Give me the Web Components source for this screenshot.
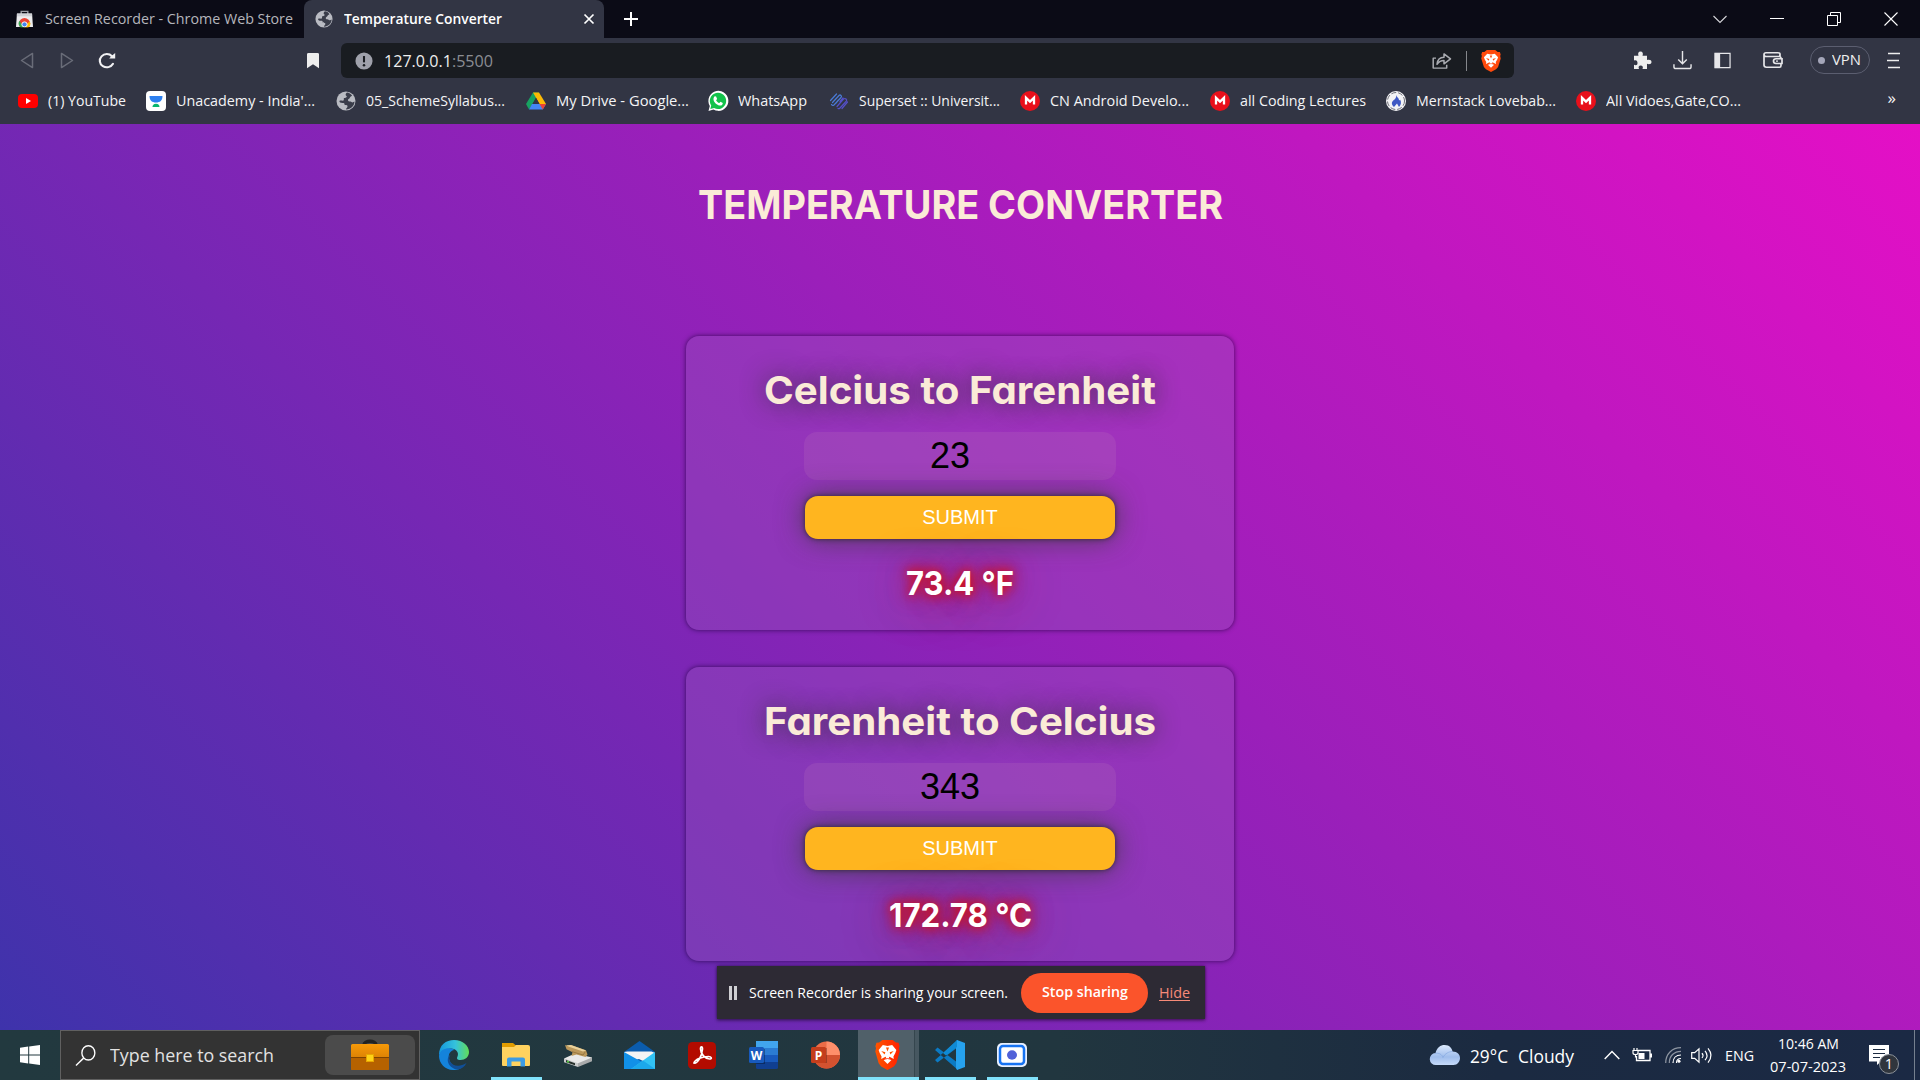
<!DOCTYPE html>
<html lang="en"><head><meta charset="utf-8"><title>Temperature Converter</title>
<style>html,body{margin:0;width:1920px;height:1080px;overflow:hidden;background:#0b0b16}</style></head>
<body><desktop-screen></desktop-screen>
<script>
const lion = (a, b) => `<defs><linearGradient id="g" x2="1"><stop stop-color="${a}"/><stop offset="1" stop-color="${b}"/></linearGradient></defs>
<path fill="url(#g)" d="M7 0h10l3 2.6 2.6 .1 1 3.6-.6 2 .7 3.2-3.2 11.7-2.4 3.2L12 30l-6.1-3.6-2.4-3.2L.3 11.5 1 8.300.4 6.300l1-3.600L4 2.600z"/>
<path fill="#fff" d="M7.500 5l4.500 1 4.500-1 4 5-1 3-1.800 3.500.3 2.500-3.600-2-1-.2.200 1.800 2.200 1.500-3.800 4-3.800-4 2.200-1.500.2-1.800-1 .2-3.600 2 .3-2.500L4.500 13l-1-3z"/>
<path fill="${a}" d="M6 11l4 1.300-.8 2.200zM18 11l-4 1.300.8 2.200zM10.500 7.500h3l-1.500 4z"/><path d="M8 19.500l4-1 4 1" fill="none" stroke="${b}" stroke-width=".8"/>`;
const mega = `<circle cx="10" cy="10" r="10" fill="#e8101b"/><path d="M6 13.500V6.800l4 3.800 4-3.800v6.700" fill="none" stroke="#fff" stroke-width="2.300"/>`;
const globe = `<circle cx="10" cy="10" r="9.500" fill="#b9bbc2"/><path fill="#3a3d4a" d="M11 1.500c-2 1.500-1.500 3-.5 3.500s-.5 2-2 2 0 2-1 2.500-3.500-.5-4 .5 1 2 3 2 2 .5 2 1.500 2.500 0 3 1.500-2 2.500-1.500 3.500c5 0 8.500-4 8.500-8-1 .5-2 1.500-3 .5s-3 0-3.500-1.500 1.500-1.500 2-3 2-1 2-2c-1-1.500-3-3-5-3z"/>`;
const ICONS = {
store:['0 0 18 20',`<path d="M5.500 4.500V1.500h7v3" fill="none" stroke="#9b9da5" stroke-width="1.500"/><path fill="#ececee" d="M1 4h16l1 15H0z"/><path fill="#cfd1d6" d="M1 4h16v3H1z"/><circle cx="9" cy="15" r="6" fill="#e94335"/><path fill="#36a852" d="M3.500 12a6 6 0 0 0 2 8H9z"/><path fill="#fbbc05" d="M14.500 12.500A6 6 0 0 1 12.500 20H8l3-4z"/><circle cx="9" cy="16" r="2.800" fill="#4285f4" stroke="#fff"/><path d="M0 19.300h18V22H0z" fill="#0b0b16"/>`],
globe:['0 0 20 20',globe],
x:['0 0 12 12',`<path d="M1.500 1.500l9 9m0-9l-9 9" stroke="#fff" stroke-width="1.700"/>`],
plus:['0 0 16 16',`<path d="M8 1v14M1 8h14" stroke="#fff" stroke-width="2"/>`],
down:['0 0 14 14',`<path d="M.5 4L7 10.500 13.500 4" fill="none" stroke="#d6d6da" stroke-width="1.100"/>`],
min:['0 0 14 14',`<path d="M0 6.500h14" stroke="#fff"/>`],
restore:['0 0 14 14',`<path d="M.5 3.500h10v10H.5zM3.500 3.500v-3h10v10h-3" fill="none" stroke="#fff"/>`],
close:['0 0 14 14',`<path d="M.5.5l13 13m0-13l-13 13" stroke="#fff" stroke-width="1.100"/>`],
back:['0 0 14 18',`<path d="M12.500 1.500v15L1.500 9z" fill="none" stroke="#696c78" stroke-width="1.500" stroke-linejoin="round"/>`],
fwd:['0 0 14 18',`<path d="M1.500 1.500v15L12.500 9z" fill="none" stroke="#696c78" stroke-width="1.500" stroke-linejoin="round"/>`],
reload:['0 0 18 18',`<path d="M15 12.500A7 7 0 1 1 14 4.500" fill="none" stroke="#f1f1f3" stroke-width="2.100" stroke-linecap="round"/><path d="M17.200 1v6h-6l2-2.600z" fill="#f1f1f3"/>`],
mark:['0 0 14 18',`<path d="M1 2.500Q1 1 2.500 1h9Q13 1 13 2.500V17.300L7 13l-6 4.300z" fill="#eee"/>`],
info:['0 0 20 20',`<circle cx="10" cy="10" r="9.500" fill="#9fa1ab"/><path d="M10 4.500v7" stroke="#191c21" stroke-width="2.300"/><circle cx="10" cy="14.700" r="1.400" fill="#191c21"/>`],
share:['0 0 20 20',`<path d="M4 7.500H1.200v10.500h13.500v-3.500M5 14c.4-4.700 3-7.500 7-7.500V3l6.500 5.300L12 13.500V10c-3 0-5 1-7 4z" fill="none" stroke="#a9abb1" stroke-width="1.500" stroke-linejoin="round"/>`],
brave:['0 0 24 30',lion('#ff4a0c','#ff4a0c')],
braveTask:['0 0 24 30',lion('#ff5500','#ff2000')],
puzzle:['0 0 20 20',`<path fill="#eee" d="M2 5h4.500C5.500 2.500 6.500.5 8.500.5s3 2 2 4.500H15v4.500c2.500-1 4.500 0 4.500 2s-2 3-4.500 2V19h-4.500c1-2.500 0-3.800-1.800-3.800S6 16.500 7 19H2v-4.500c2.300 1 3.500 0 3.500-2S4.300 9 2 10z"/>`],
download:['0 0 20 20',`<path d="M10 0v13M5.500 9l4.500 4.500L14.500 9M1 14v2.500Q1 18.500 3 18.500h14q2 0 2-2V14" fill="none" stroke="#e6e6e9" stroke-width="1.500"/>`],
side:['0 0 18 18',`<path d="M1 1.500h16v15H1z" fill="none" stroke="#e6e6e9" stroke-width="1.300"/><path d="M1 1h5.500v16H1z" fill="#e6e6e9"/>`],
wallet:['0 0 20 20',`<path d="M17 6V3.500Q17 2 15 2H3Q1 2 1 4v11.500Q1 18 3.500 18h13q1.500 0 1.500-2v-2M1 4q0 2 2 2h13q2 0 2 2M19 8.500h-6q-2.500 0-2.500 2.700T13 14h6z" fill="none" stroke="#e6e6e9" stroke-width="1.700"/><circle cx="14" cy="11.200" r="1" fill="#e6e6e9"/>`],
menu:['0 0 14 18',`<path d="M2 1.500h12M1 9h12M2 16.500h12" stroke="#eee" stroke-width="1.600"/>`],
yt:['0 0 20 20',`<rect y="3" width="20" height="14" rx="4" fill="#f00"/><path d="M8 7l5 3-5 3z" fill="#fff"/>`],
un:['0 0 20 20',`<rect width="20" height="20" rx="4" fill="#fff"/><path d="M3.500 5h13c0 4.500-2.500 6.500-6.500 6.500S3.500 9.500 3.500 5z" fill="#2d80f0"/><path d="M6.500 16c0-2 1-3.300 3.500-3.300s3.500 1.300 3.500 3.300z" fill="#08b56f"/>`],
drive:['0 0 20 18',`<path d="M7 .5h6L6.500 12 3 17.500 0 12z" fill="#17a261"/><path d="M7 .5h6L20 12h-6.500z" fill="#fcba05"/><path d="M6 12h14l-3.200 5.500H3z" fill="#4486f4"/><path d="M13.500 12H20l-3.200 5.500z" fill="#ea4335"/><path d="M10 5.800L13.500 12h-7z" fill="#323544"/>`],
wa:['0 0 20 20',`<path d="M.5 20L1.800 15A10 10 0 1 1 5.500 18.600z" fill="#fff"/><path d="M2.300 18l.9-3.500a8.200 8.200 0 1 1 2.900 2.600z" fill="#13c24b"/><path d="M6.800 5.300l1.300.1 1 2.500-1 1.300c.8 1.500 1.800 2.300 3.200 2.900l1.200-1.300 2.300 1.200c0 2-1.700 2.900-3.300 2.500C8.300 13.800 5.800 11 5.500 8.500c-.1-1.500.5-2.800 1.300-3.200z" fill="#fff"/>`],
superset:['0 0 20 20',`<g fill="none" stroke-width="1.200" stroke-linecap="round"><path d="M1.500 9.500L7.500 3M3.500 11.500L10 4.500q1-1 2 0t0 2L5 14q-1.500 1-2.500-.5M9.500 9l-2.500 3" stroke="#4a7bd8"/><path d="M8 15.500l6.500-7.500q1.500-1 2.500 0t.5 2L11 17q-1 1-2 .5M11 10.500l3-3.500M18.500 11L13 17.500" stroke="#5550c8"/></g>`],
mega:['0 0 20 20',mega],
mern:['0 0 20 20',`<circle cx="10" cy="10" r="10" fill="#f3f3f6"/><circle cx="10" cy="10" r="8.500" fill="none" stroke="#4b4d58" stroke-width=".8" stroke-dasharray="5 2"/><path d="M10.300 4c.5 2.500 3 3 2.700 5.500l1.200-.8c1.300 2.500 1 5-1.200 7.300l-2-3.500L8 16C5 13.500 5.500 10.500 7.800 9c1.500-1 2.700-2.500 2.500-5z" fill="#3f59c4"/>`],
win:['0 0 20 20',`<path fill="#fff" d="M0 2.800l8.200-1.200v7.900H0zM9.200 1.400L20 0v9.500H9.200zM0 10.500h8.200v7.900L0 17.200zM9.200 10.500H20V20L9.200 18.600z"/>`],
search:['0 0 22 20',`<circle cx="14" cy="7.500" r="6.800" fill="none" stroke="#fff" stroke-width="1.400"/><path d="M9 12.500L1 19.500" stroke="#fff" stroke-width="1.500"/>`],
brief:['0 0 38 30',`<defs><linearGradient id="b" x2="0" y2="1"><stop stop-color="#f79a08"/><stop offset="1" stop-color="#c66d02"/></linearGradient></defs><path d="M13 5c0-5 12-5 12 0" fill="none" stroke="#222" stroke-width="3.500"/><rect y="4" width="38" height="26" rx="1.500" fill="url(#b)"/><path d="M0 18h38v10.500q0 1.500-1.500 1.500h-35Q0 30 0 28.500z" fill="#b66200"/><path d="M0 17.500h38" stroke="#7e4300"/><rect x="15.500" y="14.500" width="7" height="7" fill="#ffd217" stroke="#e8a600"/>`],
edge:['0 0 30 30',`<defs><linearGradient id="e" x2="1"><stop stop-color="#1597dd"/><stop offset=".55" stop-color="#35c2dc"/><stop offset="1" stop-color="#62dd57"/></linearGradient></defs><path d="M0 15C0 5 7 0 15 0c9 0 15 6 15 12 0 5-4 8-8.500 8-3.500 0-4-1.500-3-3.500C21 11 14 7 9 9 4 10 1 14 0 15z" fill="url(#e)"/><path d="M0 16C1 7.500 12 7 15.500 10 11 10.500 9 14.500 10 19c1 5 6 9 12 9-3 2-6 2-8 2C6 30 0 23 0 16z" fill="#1483dc"/><path d="M11.500 14.500C8 20 13 27 21 25.500c3-.5 4.500-1.500 6.500-2.500-2 4-5 6-8.500 6.500C10 29 5.500 19 11.500 14.500z" fill="#114f97"/>`],
folder:['0 0 28 24',`<path d="M0 0h11l3 2.500v6H0z" fill="#e19c00"/><path d="M0 4h12l2-2h12q2 0 2 2v18q0 1-1 1H1q-1 0-1-1z" fill="#ffd25f"/><path d="M5 23.500v-7q0-2 2-2h14q2 0 2 2v7h-4.500v-5h-9v5z" fill="#3c9be4"/>`],
disk:['0 0 28 24',`<path d="M0 15l11-5 17 4v2l-13 7z" fill="#e9e9e9"/><path d="M0 15l14 5v4L0 19z" fill="#c9cbcc"/><path d="M14 20l14-6v4l-14 6z" fill="#a9abac"/><path d="M2 16.800l9 3.400v2L2 19z" fill="#26302b"/><circle cx="4" cy="18.500" r="1" fill="#5cdb48"/><path d="M1 1l3 1 3-1 15 5.500 1.500 4.500-2 2.500-9-2.500-5 1.500 1-4-6-3z" fill="#bb985b"/><path d="M2 1.300l3 1.500 14 5 3-1L7 1z" fill="#ead19a"/><path d="M8 8l11 3.500 2-3" fill="none" stroke="#8d6d38" stroke-width=".8"/>`],
mail:['0 0 31 28',`<path d="M0 11L15.500 0 31 11v4L15 24 0 15z" fill="#0b5cad"/><path d="M3.500 10.500h24L31 12v14L15 18 0 22V11z" fill="#f4f4f4"/><path d="M0 11l18 10-9 7H0z" fill="#1190e7"/><path d="M31 11L7 28h24z" fill="#32c2f4"/><path d="M19 19.500L31 28H7z" fill="#1ca8eb"/>`],
acro:['0 0 28 27',`<rect width="28" height="27" rx="4.500" fill="#b30b00"/><path d="M6 21c3 1 8-6 8.500-14 0-3-2-3-2 0 0 5 5 10 9 10 3 0 2-2.500-1-2.500C15 14.500 7 17 6 21z" fill="none" stroke="#fff" stroke-width="1.700"/>`],
word:['0 0 29 28',`<rect x="7" width="22" height="28" rx="1.500" fill="#103f91"/><path fill="#41a5ee" d="M7 0h22v7H7z"/><path fill="#2b7cd3" d="M7 7h22v7H7z"/><path fill="#185abd" d="M7 14h22v7H7z"/><path d="M7 8h9v15H7z" opacity=".3"/><rect y="6" width="15" height="16" rx="1.500" fill="#185abd"/><text x="7.500" y="18.500" text-anchor="middle" font-family="Open Sans" font-size="12" font-weight="700" fill="#fff">W</text>`],
ppt:['0 0 29 28',`<circle cx="15.500" cy="14" r="13.500" fill="#ed6c47"/><path d="M15.500.5A13.500 13.500 0 0 1 29 14H15.500z" fill="#ff8f6b"/><path d="M2 14h27a13.500 13.500 0 0 1-27 0z" fill="#d35230"/><path d="M7 7h9v15H7z" opacity=".25"/><rect y="6" width="15" height="16" rx="1.500" fill="#c43e1c"/><text x="7.500" y="18.500" text-anchor="middle" font-family="Open Sans" font-size="12" font-weight="700" fill="#fff">P</text>`],
code:['0 0 30 30',`<path d="M0 10l2.500-2.500L23 23v7zM0 20l2.500 2.500L23 7V0z" fill="#0b7ac4"/><path d="M22 0l8 3v24l-8 3-1-2V2z" fill="#26a2ee"/><path d="M22 0L8 13l3 2.500L22 7z" fill="#0f8ad4"/>`],
rec:['0 0 30 24',`<rect width="30" height="24" rx="5" fill="#e9f1ff"/><rect x="3" y="3" width="24" height="18" rx="3" fill="#fff" stroke="#1673f2" stroke-width="2.500"/><ellipse cx="15" cy="12" rx="5" ry="4.700" fill="#5061d8"/>`],
cloud:['0 0 30 20',`<defs><linearGradient id="c" x2="0" y2="1"><stop stop-color="#dbe9fd"/><stop offset=".6" stop-color="#9fbdec"/><stop offset="1" stop-color="#c6dbfa"/></linearGradient></defs><path d="M6 20a6 6 0 0 1-.5-12C7 2.500 10.500 0 14.500 0 20 0 22 3.500 22.500 6.500c5 0 7.500 3 7.500 6.500s-2.500 7-6.500 7z" fill="url(#c)"/><path d="M5 8.500c4-1 7 1 8 4 2-4 6-6 9.500-6" fill="none" stroke="#7fa4e0" opacity=".6"/>`],
up:['0 0 16 10',`<path d="M.7 9L8 1.500 15.300 9" fill="none" stroke="#fff" stroke-width="1.400"/>`],
batt:['0 0 20 14',`<path d="M6 2.500h12v10H4.500V8" fill="none" stroke="#fff" stroke-width="1.300"/><path d="M18 5.500h2v4h-2zM6.500 5h6v6h-6z" fill="#fff"/><path d="M1 2.500h5v2.500q0 1.500-2.500 1.500T1 5zM2 0v3M5 0v3M3.500 6v3.500" fill="none" stroke="#fff" stroke-width="1.200"/>`],
wifi:['0 0 16 16',`<g fill="none" stroke="#fff" stroke-width="1.200"><path d="M.7 16C.7 7 7 .7 16 .7M4.300 16C4.300 9 9 4.300 16 4.300" opacity=".5"/><path d="M8 16c0-5 3-8 8-8M11.500 16c0-3 1.500-4.500 4.500-4.500"/></g><circle cx="14" cy="14.300" r="1.500" fill="#fff"/>`],
vol:['0 0 21 18',`<path d="M.7 6h3L8 2v14l-4.300-4h-3zM11 6.500q2 2.500 0 5M14 4q4 5 0 10M17 1.500q6 7.500 0 15" fill="none" stroke="#fff" stroke-width="1.200"/>`],
note:['0 0 20 20',`<path d="M0 0h20v16.500H12L8 20v-3.500H0z" fill="#fff"/><path d="M4 4.500h12M4 8.500h12M4 12.500h7" stroke="#1c2b41" stroke-width="1.200"/>`],
pause:['0 0 8 14',`<path d="M0 0h3v14H0zM5 0h3v14H5z" fill="#cfcfd3"/>`]
};
const part = (name, html, after) => customElements.define(name, class extends HTMLElement {
  connectedCallback(){ if(!this.shadowRoot) this.attachShadow({mode:'open'}).innerHTML = typeof html==='function'?html(this):html; after&&after(this); }
});
/* ui-icon: width and height are given as attributes */
part('ui-icon', el => { const [v,p]=ICONS[el.getAttribute('name')]; const w=el.getAttribute('w'),h=el.getAttribute('h')||w;
  return `<style>:host{display:block;flex:none;width:${w}px;height:${h}px}svg{display:block;overflow:visible}</style><svg width="${w}" height="${h}" viewBox="${v}" preserveAspectRatio="none">${p}</svg>`; });
/* fit-text: one line of text condensed or widened to the width w */
const fit = el => { const s=el.shadowRoot.querySelector('span'); s.style.transform='none'; const n=s.getBoundingClientRect().width; if(n) s.style.transform=`scaleX(${el.getAttribute('w')/n})`; };
part('fit-text', el=>`<style>:host{display:block;flex:none;width:${el.getAttribute('w')}px;white-space:nowrap}span{display:inline-block;transform-origin:0 50%}</style><span><slot></slot></span>`, el=>{ fit(el); addEventListener('load',()=>fit(el)); });

part('tab-strip', `<style>:host{display:flex;height:38px;background:#0b0b16;align-items:center;color:#b5b6bc;font-size:14.800px}
.t1{display:flex;align-items:center;gap:12px;width:288px;padding-left:16px}.t1 ui-icon{margin-top:-1px}
.t2{display:flex;align-items:center;width:279px;height:38px;padding:0 10px 0 11px;background:#323544;border-radius:8px 8px 0 0;color:#fff;font-weight:600}
.t2 fit-text{margin-left:11px}.t2 .x{margin-left:auto;margin-right:-1px}.plus{margin-left:19px}
.w{margin-left:auto;display:flex;gap:43px;padding-right:22px;margin-top:-1px}fit-text{line-height:36px;height:38px;margin-top:-1px}</style>
<div class="t1"><ui-icon name="store" w="17" h="18"></ui-icon><fit-text w="248">Screen Recorder - Chrome Web Store</fit-text></div>
<div class="t2"><ui-icon name="globe" w="18"></ui-icon><fit-text w="158">Temperature Converter</fit-text><ui-icon class="x" name="x" w="12"></ui-icon></div>
<ui-icon class="plus" name="plus" w="16"></ui-icon>
<div class="w"><ui-icon name="down" w="14"></ui-icon><ui-icon name="min" w="14"></ui-icon><ui-icon name="restore" w="14"></ui-icon><ui-icon name="close" w="14"></ui-icon></div>`);

part('tool-bar', `<style>:host{display:flex;height:44px;background:#323544;align-items:center;padding:0 20px 0 20px;color:#eee}
.nav{display:flex;align-items:center;width:321px;flex:none}.nav :nth-child(2){margin-left:26px}.nav :nth-child(3){margin-left:24px}.nav :nth-child(4){margin-left:190px}
.url{display:flex;flex:none;align-items:center;width:1146px;height:35px;background:#191c21;border-radius:6px;padding:0 13px 0 14px;font-size:17px;line-height:34px;margin-top:1px}
.url span{color:#8b8d93}.url fit-text{margin-left:11px}.url .s{margin-left:auto}.bar{width:1px;height:20px;background:#85878c;margin:0 14px}
.r{display:flex;align-items:center;margin-left:auto}.vpn{display:flex;align-items:center;box-sizing:border-box;width:60px;height:28px;border:1.500px solid #5b5e70;border-radius:14px;padding-left:7px;gap:7px;font-size:14.800px;line-height:24px;margin:0 16px 0 27px}
.vpn fit-text{margin-top:-2px}
i{width:7px;height:7px;border-radius:50%;background:#a4a6b9}</style>
<div class="nav"><ui-icon name="back" w="14" h="17"></ui-icon><ui-icon name="fwd" w="14" h="17"></ui-icon><ui-icon name="reload" w="18" h="17"></ui-icon><ui-icon name="mark" w="14" h="17"></ui-icon></div>
<div class="url"><ui-icon name="info" w="18"></ui-icon><fit-text w="109">127.0.0.1<span>:5500</span></fit-text><ui-icon class="s" name="share" w="20" h="19"></ui-icon><div class="bar"></div><ui-icon name="brave" w="20" h="22"></ui-icon></div>
<div class="r"><ui-icon name="puzzle" w="20" h="19"></ui-icon><ui-icon name="download" w="19" style="margin-left:21px"></ui-icon><ui-icon name="side" w="17" style="margin-left:22px"></ui-icon><ui-icon name="wallet" w="20" h="18" style="margin-left:32px"></ui-icon><div class="vpn"><i></i><fit-text w="29">VPN</fit-text></div><ui-icon name="menu" w="14" h="17"></ui-icon></div>`);

const marks=[['yt',128,78,'(1) YouTube'],['un',190,139,"Unacademy - India'..."],['globe',190,139,'05_SchemeSyllabus...'],['drive',182,133,'My Drive - Google...'],['wa',121,69,'WhatsApp'],['superset',191,141,'Superset :: Universit...'],['mega',190,139,'CN Android Develo...'],['mega',176,126,'all Coding Lectures'],['mern',190,140,'Mernstack Lovebab...'],['mega',190,135,'All Vidoes,Gate,CO...']];
part('bookmark-bar', `<style>:host{display:flex;height:42px;background:#323544;color:#f4f4f6;padding-left:18px;font-size:14.800px;box-sizing:border-box}div{display:flex;align-items:center;gap:10px;flex:none;height:38px}fit-text{line-height:36px;margin-top:-2px}b{margin:0 24px 0 auto;font-weight:400;font-size:17px;line-height:32px}</style>
${marks.map(([i,s,w,t])=>`<div style="width:${s}px"><ui-icon name="${i}" w="20" h="${i=='drive'?18:20}"></ui-icon><fit-text w="${w}">${t}</fit-text></div>`).join('')}<b>»</b>`);

part('converter-card', `<style>:host{display:flex;flex-direction:column;align-items:center;box-sizing:border-box;width:548px;height:294px;padding-top:30px;border-radius:13px;background:rgba(156,92,190,.34);box-shadow:0 0 5px rgba(30,0,60,.75)}
h2{margin:0;font:700 38.500px/48px Inter,sans-serif;color:#faebd7;text-shadow:0 0 24px rgba(50,50,50,.9);font-feature-settings:"cv11"}
.in{box-sizing:border-box;width:312px;height:48px;margin-top:18px;padding-right:20px;border-radius:13px;background:rgba(190,120,190,.2);font:36px/48px "Liberation Sans",sans-serif;color:#000;text-align:center}
button{margin:16px 0 0;padding:0;border:0;width:310px;height:43px;border-radius:13px;background:#ffb51f;color:#fff;font:20px/41px "Liberation Sans",sans-serif;box-shadow:0 0 5px rgba(30,40,30,.8),0 0 28px rgba(60,60,60,.8)}
p{margin:24px 0 0;font:700 33px/40px Inter,sans-serif;color:#fff;text-shadow:0 0 10px rgba(215,15,10,.9),0 0 14px rgba(215,15,10,.8),0 0 22px rgba(205,15,20,.5),0 6px 50px rgba(200,20,30,.8)}</style>
<h2><slot name="title"></slot></h2><div class="in"><slot name="value"></slot></div><button>SUBMIT</button><p><slot name="result"></slot></p>`);

part('converter-page', `<style>:host{display:flex;flex-direction:column;align-items:center;box-sizing:border-box;height:906px;padding-top:56px;overflow:hidden;background:linear-gradient(45deg,#3e33ab,#e50fc6)}
h1{margin:0 0 106px;font:700 39.500px/50px Inter,sans-serif;color:#faebd7}converter-card+converter-card{margin-top:37px}</style>
<h1><fit-text w="525">TEMPERATURE CONVERTER</fit-text></h1>
<converter-card><fit-text slot="title" w="392">Celcius to Farenheit</fit-text><span slot="value">23</span><fit-text slot="result" w="108">73.4 °F</fit-text></converter-card>
<converter-card><fit-text slot="title" w="392">Farenheit to Celcius</fit-text><span slot="value">343</span><fit-text slot="result" w="143" style="margin-top:1px">172.78 °C</fit-text></converter-card>`);

part('share-notice', `<style>:host{position:absolute;left:716.500px;top:966px;display:flex;align-items:center;box-sizing:border-box;width:488px;height:53px;padding-left:12.500px;background:#2d2a34;color:#fff;font-size:14.800px;box-shadow:0 0 3px #0008,0 2px 3px #0004}
fit-text{line-height:48px;margin-top:-1px}.b{display:flex;justify-content:center;width:127px;height:40px;border-radius:20px;background:#fb542b;font-weight:600;margin:0 11px 0 13px}.b fit-text{line-height:38px}.h{color:#f78a78}u{text-underline-offset:2px}</style>
<ui-icon name="pause" w="8" h="14"></ui-icon><fit-text w="259" style="margin-left:12px">Screen Recorder is sharing your screen.</fit-text><div class="b"><fit-text w="86">Stop sharing</fit-text></div><fit-text class="h" w="31"><u>Hide</u></fit-text>`);

const apps=[['edge',30,30],['folder',28,24,1],['disk',28,23],['mail',31,28],['acro',28,27],['word',29,28],['ppt',29,28],['braveTask',25,30,2],['code',30,30,1],['rec',30,24,1]];
part('task-bar', `<style>:host{display:flex;height:50px;color:#fff;background:linear-gradient(90deg,#22393f 0,#21363f 55%,#1b2a41 78%,#1b2944)}
.start{width:60px;display:grid;place-items:center}.s{box-sizing:border-box;width:360px;height:50px;border:1px solid #606060;background:#333;display:flex;align-items:center;padding-left:14px;color:#e2e2e2;font-size:18.500px;line-height:46px}.s fit-text{margin-left:14px}
.box{margin:0 4px 0 auto;width:90px;height:40px;border-radius:8px;background:#4b4b4b;display:grid;place-items:center}
.apps{display:flex;margin-left:3px}.a{width:62px;box-sizing:border-box;padding-right:1px;display:grid;place-items:center;background:linear-gradient(#80e2fb,#80e2fb) center bottom/0 3px no-repeat}.a1{background-size:51px 3px}
.a2{background:linear-gradient(#80e2fb,#80e2fb) 1px bottom/61px 3px no-repeat,linear-gradient(90deg,transparent 1px,#506069 1px 57px,#35464e 57px 58px,#465760 58px)}
.tray{display:flex;align-items:center;margin-left:auto}.tray>*{flex:none}.tx{font-size:18.500px;line-height:45px}.sm{font-size:14.800px;line-height:23px}
.clock{display:grid;justify-items:center;width:76px;height:46px;margin:-1px 23px 0 16px}
.n{position:relative}.n b{position:absolute;left:10px;top:9px;width:18px;height:18px;border:1.500px solid #8c929a;border-radius:50%;background:#30353d;font:400 14.500px/18px "Open Sans";text-align:center}
.end{width:1px;height:50px;background:#75808f;margin:0 5px 0 25px}</style>
<div class="start"><ui-icon name="win" w="20"></ui-icon></div>
<div class="s"><ui-icon name="search" w="21"></ui-icon><fit-text w="164">Type here to search</fit-text><div class="box"><ui-icon name="brief" w="38" h="30"></ui-icon></div></div>
<div class="apps">${apps.map(([n,w,h,k])=>`<div class="a a${k||0}"><ui-icon name="${n}" w="${w}" h="${h}"></ui-icon></div>`).join('')}</div>
<div class="tray"><ui-icon name="cloud" w="30" h="20"></ui-icon><fit-text class="tx" w="38" style="margin-left:10px">29°C</fit-text><fit-text class="tx" w="56" style="margin-left:10px">Cloudy</fit-text>
<ui-icon name="up" w="16" h="10" style="margin-left:30px"></ui-icon><ui-icon name="batt" w="20" h="14" style="margin-left:12px"></ui-icon><ui-icon name="wifi" w="16" style="margin-left:13px"></ui-icon><ui-icon name="vol" w="21" h="17" style="margin-left:10px"></ui-icon><fit-text class="sm" w="29" style="margin-left:13px">ENG</fit-text>
<div class="clock sm"><fit-text w="61">10:46 AM</fit-text><fit-text w="76">07-07-2023</fit-text></div><div class="n"><ui-icon name="note" w="20"></ui-icon><b>1</b></div><div class="end"></div></div>`);

part('desktop-screen', `<style>:host{display:flex;flex-direction:column;width:1920px;height:1080px;font-family:"Open Sans","Noto Sans",sans-serif;position:relative}</style>
<tab-strip></tab-strip><tool-bar></tool-bar><bookmark-bar></bookmark-bar><converter-page></converter-page><task-bar></task-bar><share-notice></share-notice>`);
</script></body></html>
